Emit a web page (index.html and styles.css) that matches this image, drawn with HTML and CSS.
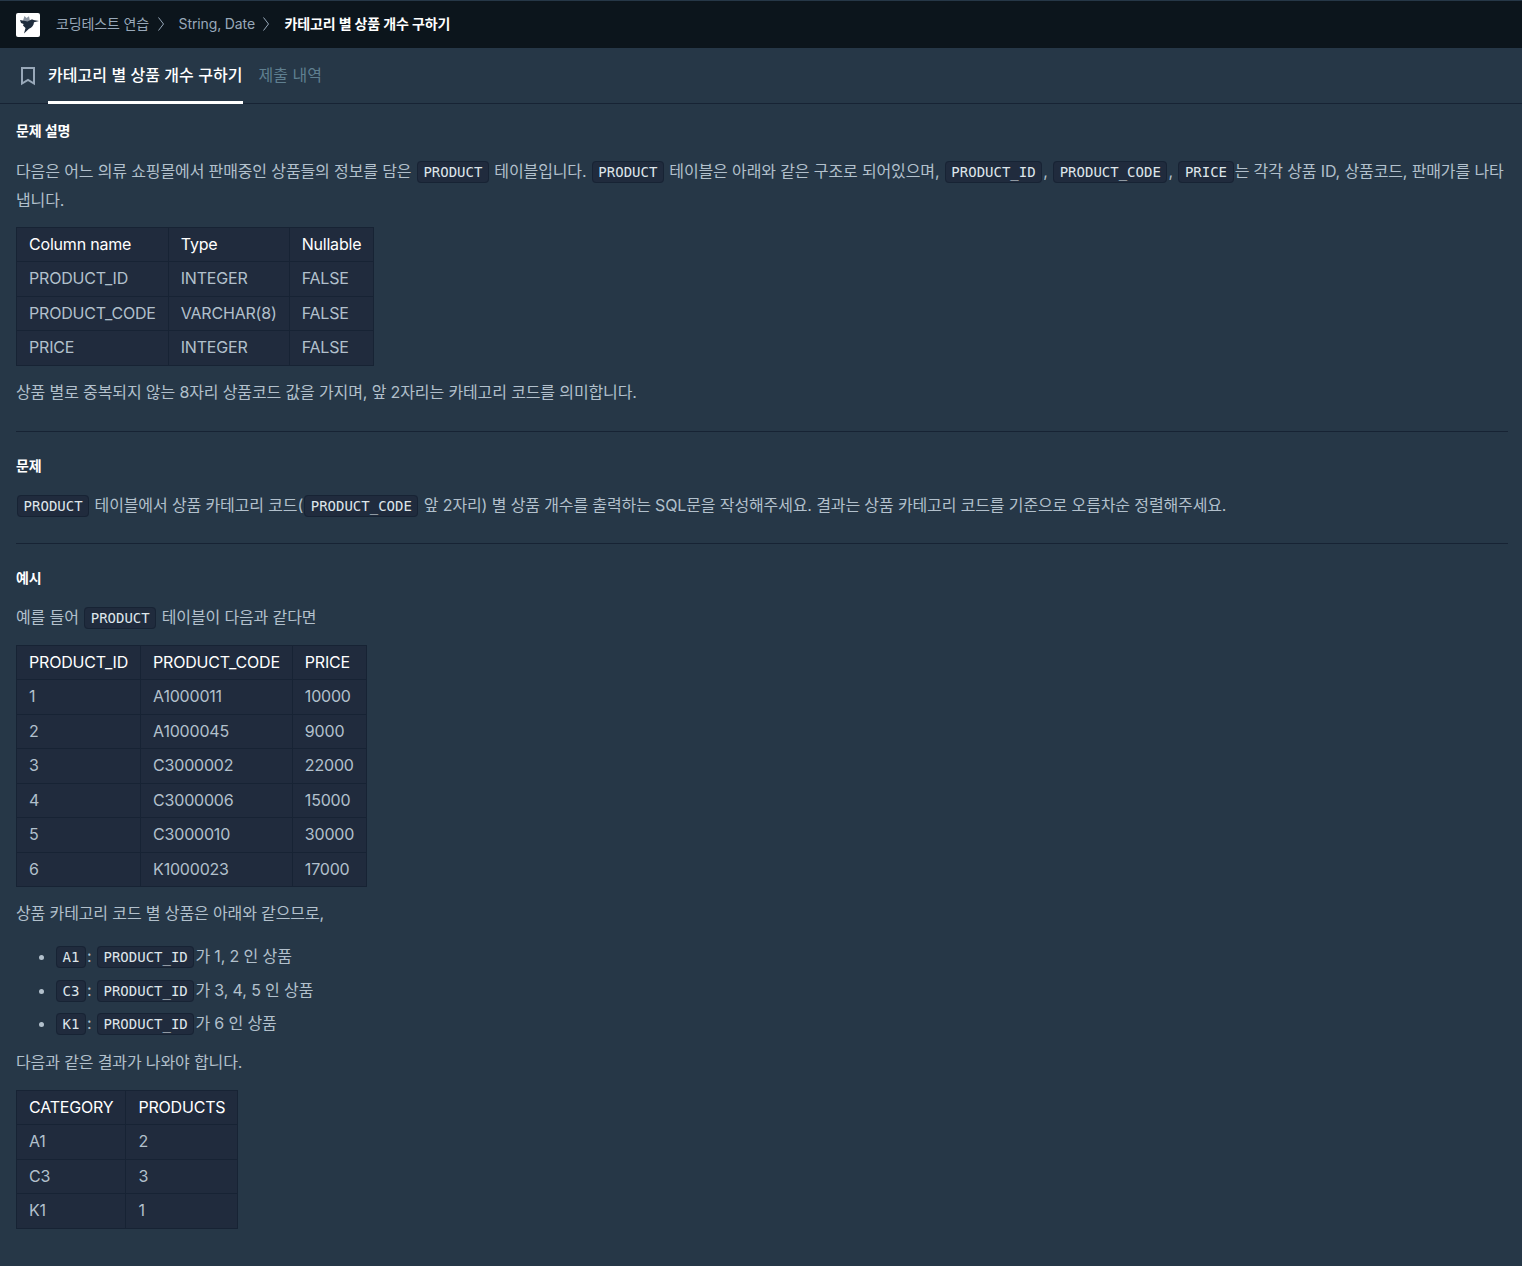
FILE: index.html
```html
<!DOCTYPE html>
<html lang="ko">
<head>
<meta charset="utf-8">
<title>카테고리 별 상품 개수 구하기</title>
<link rel="stylesheet" href="styles.css">
</head>
<body>
<header class="topbar">
  <span class="logo">
    <svg viewBox="0 0 24 24" width="24" height="24">
      <path fill="#8a94a0" d="M7 7.500L8.500 3l2 2L13 3.200l1 4.800-5 3z"/>
      <path fill="#1e2c3c" d="M4 7l4 .8 3.500 .8 3-1.600c1-.6 2-.6 3 0L23 8l-5 1.200c-.3 3-2 5.500-5 6.500L8 20.500l1.500-5.500L7 12.500l.6-1.500L5 10z"/>
    </svg>
  </span>
  <nav class="crumbs">
    <a class="crumb">코딩테스트 연습</a>
    <svg class="chev" viewBox="0 0 6 14" width="6" height="14"><path d="M.5 .5L5.500 7 .5 13.500" fill="none" stroke="#98a8b9" stroke-width="1"/></svg>
    <a class="crumb">String, Date</a>
    <svg class="chev" viewBox="0 0 6 14" width="6" height="14"><path d="M.5 .5L5.500 7 .5 13.500" fill="none" stroke="#98a8b9" stroke-width="1"/></svg>
    <strong class="crumb-current">카테고리 별 상품 개수 구하기</strong>
  </nav>
</header>
<div class="tabs">
  <svg class="bookmark" viewBox="0 0 16 20" width="16" height="20"><path d="M2 2h12v15.500l-6-3.500-6 3.500z" fill="none" stroke="#98a8b9" stroke-width="2"/></svg>
  <div class="tab tab-active">카테고리 별 상품 개수 구하기</div>
  <div class="tab">제출 내역</div>
</div>
<main class="content">
  <h6>문제 설명</h6>
  <p>다음은 어느 의류 쇼핑몰에서 판매중인 상품들의 정보를 담은 <code>PRODUCT</code> 테이블입니다. <code>PRODUCT</code> 테이블은 아래와 같은 구조로 되어있으며, <code>PRODUCT_ID</code>, <code>PRODUCT_CODE</code>, <code>PRICE</code>는 각각 상품 ID, 상품코드, 판매가를 나타냅니다.</p>
  <table>
    <thead><tr><th>Column name</th><th>Type</th><th>Nullable</th></tr></thead>
    <tbody>
      <tr><td>PRODUCT_ID</td><td>INTEGER</td><td>FALSE</td></tr>
      <tr><td>PRODUCT_CODE</td><td>VARCHAR(8)</td><td>FALSE</td></tr>
      <tr><td>PRICE</td><td>INTEGER</td><td>FALSE</td></tr>
    </tbody>
  </table>
  <p>상품 별로 중복되지 않는 8자리 상품코드 값을 가지며, 앞 2자리는 카테고리 코드를 의미합니다.</p>
  <hr>
  <h6>문제</h6>
  <p><code>PRODUCT</code> 테이블에서 상품 카테고리 코드(<code>PRODUCT_CODE</code> 앞 2자리) 별 상품 개수를 출력하는 SQL문을 작성해주세요. 결과는 상품 카테고리 코드를 기준으로 오름차순 정렬해주세요.</p>
  <hr>
  <h6>예시</h6>
  <p>예를 들어 <code>PRODUCT</code> 테이블이 다음과 같다면</p>
  <table>
    <thead><tr><th>PRODUCT_ID</th><th>PRODUCT_CODE</th><th>PRICE</th></tr></thead>
    <tbody>
      <tr><td>1</td><td>A1000011</td><td>10000</td></tr>
      <tr><td>2</td><td>A1000045</td><td>9000</td></tr>
      <tr><td>3</td><td>C3000002</td><td>22000</td></tr>
      <tr><td>4</td><td>C3000006</td><td>15000</td></tr>
      <tr><td>5</td><td>C3000010</td><td>30000</td></tr>
      <tr><td>6</td><td>K1000023</td><td>17000</td></tr>
    </tbody>
  </table>
  <p>상품 카테고리 코드 별 상품은 아래와 같으므로,</p>
  <ul>
    <li><code>A1</code>: <code>PRODUCT_ID</code>가 1, 2 인 상품</li>
    <li><code>C3</code>: <code>PRODUCT_ID</code>가 3, 4, 5 인 상품</li>
    <li><code>K1</code>: <code>PRODUCT_ID</code>가 6 인 상품</li>
  </ul>
  <p>다음과 같은 결과가 나와야 합니다.</p>
  <table>
    <thead><tr><th>CATEGORY</th><th>PRODUCTS</th></tr></thead>
    <tbody>
      <tr><td>A1</td><td>2</td></tr>
      <tr><td>C3</td><td>3</td></tr>
      <tr><td>K1</td><td>1</td></tr>
    </tbody>
  </table>
</main>
</body>
</html>
```
FILE: styles.css
```css
* { box-sizing: border-box; }
html, body { margin: 0; padding: 0; }
body {
  background: #263747;
  color: #b2c0cc;
  font-family: Inter, "Noto Sans CJK KR", sans-serif;
  font-size: 16px;
  letter-spacing: -0.008em;
  line-height: 1.8;
}
.topbar {
  height: 48px;
  background: #0c151c;
  border-top: 1px solid #263747;
  display: flex;
  align-items: center;
  padding-left: 16px;
}
.logo {
  width: 24px;
  height: 24px;
  background: #fff;
  border-radius: 2px;
  display: block;
  flex: none;
  margin-top: 1px;
}
.logo svg { display: block; }
.crumbs {
  display: flex;
  align-items: center;
  margin-left: 16px;
  margin-bottom: 2px;
  font-size: 14px;
  line-height: 20px;
  letter-spacing: -0.009em;
}
.crumb { color: #98a8b9; }
.chev { margin: 0 15px 0 8.5px; }
.crumb-current { color: #fff; font-weight: 700; }
.tabs {
  height: 56px;
  border-bottom: 1px solid #172334;
  display: flex;
  padding-left: 20px;
  letter-spacing: 0;
}
.bookmark { margin: 18px 12px 0 0; }
.tab {
  color: #5f7f90;
  line-height: 54px;
  height: 56px;
  margin-right: 16px;
}
.tab-active {
  color: #fff;
  font-weight: 500;
  letter-spacing: 0.05px;
  border-bottom: 3px solid #fff;
}
.content { padding: 16px 14px 0 16px; }
h6 {
  margin: 0 0 14.55px;
  font-size: 14px;
  line-height: 22px;
  font-weight: 700;
  color: #fff;
}
hr + h6 { margin-bottom: 14.05px; }
p { margin: 0 0 12.1px; line-height: 29px; }
code {
  font-family: "DejaVu Sans Mono", monospace;
  font-size: 14px;
  letter-spacing: 0;
  line-height: 1;
  color: #dee5ea;
  background: #202b3d;
  border: 1px solid #172334;
  border-radius: 4px;
  padding: 2px 5.6px;
  margin: 0 1px;
}
li code:first-child { margin-left: 0; }
table {
  border-collapse: collapse;
  background: #202b3d;
  margin: 0 0 12.1px;
  letter-spacing: -0.012em;
}
th, td {
  border: 1px solid #172334;
  padding: 6px 12px;
  line-height: 21.5px;
  text-align: left;
  font-weight: 400;
}
th { color: #fff; }
hr { border: 0; border-top: 1px solid #172334; margin: 23.8px 0 23px; }
ul { margin: 14px 0 10.3px; padding-left: 40px; }
li { line-height: 29px; margin-bottom: 4.5px; }
li::marker { color: #b2c0cc; }
```
